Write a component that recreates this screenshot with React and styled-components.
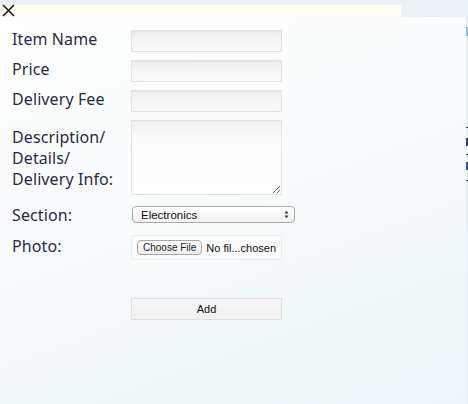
import React from "react";
import styled, { createGlobalStyle } from "styled-components";

const GlobalStyle = createGlobalStyle`
  html, body {
    margin: 0;
    padding: 0;
    background: #e9f1f5;
  }
  #root {
    height: 404px;
    overflow: hidden;
  }
`;

const Page = styled.div`
  position: relative;
  width: 468px;
  height: 404px;
  padding-top: 5px;
  box-sizing: border-box;
  background: #e9f1f5;
  font-family: "Noto Sans", "Open Sans", sans-serif;
`;

const TopStrip = styled.div`
  width: 401px;
  height: 12px;
  background: #fffef5;
`;

const Close = styled.button`
  position: absolute;
  top: 4px;
  left: 2px;
  width: 13px;
  height: 13px;
  padding: 0;
  border: none;
  background: transparent;
  cursor: pointer;
  svg {
    display: block;
  }
`;

const Panel = styled.div`
  width: 466px;
  height: 387px;
  box-sizing: border-box;
  padding: 13px 0 0 12px;
  background: linear-gradient(160deg, #ffffff 0%, #f8fbfc 45%, #edf4f7 100%);
`;

const Form = styled.form`
  display: flex;
  flex-direction: column;
`;

const Row = styled.div`
  display: flex;
  align-items: flex-start;
  margin-bottom: ${p => p.$gap || 8}px;
`;

const Label = styled.label`
  width: 119px;
  flex: none;
  font-size: 16px;
  line-height: ${p => (p.$multi ? "21px" : "19px")};
  padding-top: ${p => (p.$multi ? "7px" : p.$drop ? "2px" : "0")};
  color: #2a2a44;
  letter-spacing: 0.1px;
`;

const Input = styled.input`
  display: block;
  box-sizing: border-box;
  width: 151px;
  height: 22px;
  margin: 0;
  border: 1px solid #e2e2e2;
  background: linear-gradient(#efefef, #f7f7f7 60%, #fafafa);
  box-shadow: inset 0 1px 2px rgba(0, 0, 0, 0.05);
  outline: none;
`;

const TextArea = styled.textarea`
  display: block;
  box-sizing: border-box;
  width: 151px;
  height: 75px;
  margin: 0;
  border: 1px solid #e2e2e2;
  background: linear-gradient(#efefef, #fdfdfd 25%, #ffffff);
  outline: none;
  resize: both;
`;

const SelectWrap = styled.div`
  position: relative;
  margin-left: 1px;
  width: 163px;
  height: 17px;
`;

const Select = styled.select`
  display: block;
  appearance: none;
  box-sizing: border-box;
  width: 100%;
  height: 17px;
  margin: 0;
  padding: 0 0 0 8px;
  border: 1px solid #a9a9a9;
  border-radius: 4px;
  background: linear-gradient(#ffffff, #f1f1f1);
  font-family: "Liberation Sans", Arial, sans-serif;
  font-size: 11.5px;
  color: #111;
  outline: none;
`;

const Arrows = styled.span`
  position: absolute;
  right: 6px;
  top: 4px;
  pointer-events: none;
  svg {
    display: block;
  }
`;

const FileBox = styled.div`
  box-sizing: border-box;
  width: 151px;
  height: 25px;
  display: flex;
  align-items: center;
  gap: 4px;
  padding-left: 5px;
  border: 1px solid #ececec;
  background: #fbfbfb;
`;

const FileButton = styled.button`
  box-sizing: border-box;
  height: 15px;
  padding: 0 5px;
  border: 1px solid #a6a6a6;
  border-radius: 4px;
  background: linear-gradient(#ffffff, #ececec);
  font-family: "Liberation Sans", Arial, sans-serif;
  font-size: 10px;
  color: #222;
  line-height: 13px;
`;

const FileText = styled.span`
  font-family: "Liberation Sans", Arial, sans-serif;
  font-size: 11px;
  color: #111;
  white-space: nowrap;
`;

const AddButton = styled.button`
  box-sizing: border-box;
  margin-left: 119px;
  width: 151px;
  height: 22px;
  border: 1px solid #e0e0e0;
  background: linear-gradient(#f7f7f7, #f1f1f1);
  font-family: "Liberation Sans", Arial, sans-serif;
  font-size: 11px;
  color: #111;
  cursor: pointer;
`;

const Edge = styled.div`
  position: absolute;
  right: 0;
  width: 2px;
  height: ${p => p.$h}px;
  top: ${p => p.$y}px;
  background: ${p => p.$c};
`;

export default function App() {
  return (
    <Page>
      <GlobalStyle />
      <TopStrip />
      <Close aria-label="Close">
        <svg width="13" height="13" viewBox="0 0 13 13">
          <path d="M1 1 L12 12 M12 1 L1 12" stroke="#111" strokeWidth="1.5" />
        </svg>
      </Close>
      <Panel>
        <Form>
          <Row>
            <Label>Item Name</Label>
            <Input />
          </Row>
          <Row>
            <Label>Price</Label>
            <Input />
          </Row>
          <Row>
            <Label>Delivery Fee</Label>
            <Input />
          </Row>
          <Row $gap={11}>
            <Label $multi>
              Description/
              <br />
              Details/
              <br />
              Delivery Info:
            </Label>
            <TextArea />
          </Row>
          <Row $gap={10}>
            <Label>Section:</Label>
            <SelectWrap>
              <Select defaultValue="Electronics">
                <option>Electronics</option>
              </Select>
              <Arrows>
                <svg width="5" height="9" viewBox="0 0 5 9">
                  <path d="M0.5 3.5 L2.5 0.8 L4.5 3.5 Z M0.5 5.5 L2.5 8.2 L4.5 5.5 Z" fill="#333" />
                </svg>
              </Arrows>
            </SelectWrap>
          </Row>
          <Row $gap={38}>
            <Label $drop>Photo:</Label>
            <FileBox>
              <FileButton type="button">Choose File</FileButton>
              <FileText>No fil...chosen</FileText>
            </FileBox>
          </Row>
          <AddButton type="button">Add</AddButton>
        </Form>
      </Panel>
      <Edge $y={27} $h={9} $c="#8fb8d8" />
      <Edge $y={127} $h={1} $c="#333" />
      <Edge $y={138} $h={8} $c="#3a3f66" />
      <Edge $y={154} $h={1} $c="#333" />
      <Edge $y={162} $h={8} $c="#3b4f9a" />
      <Edge $y={180} $h={1} $c="#333" />
    </Page>
  );
}
